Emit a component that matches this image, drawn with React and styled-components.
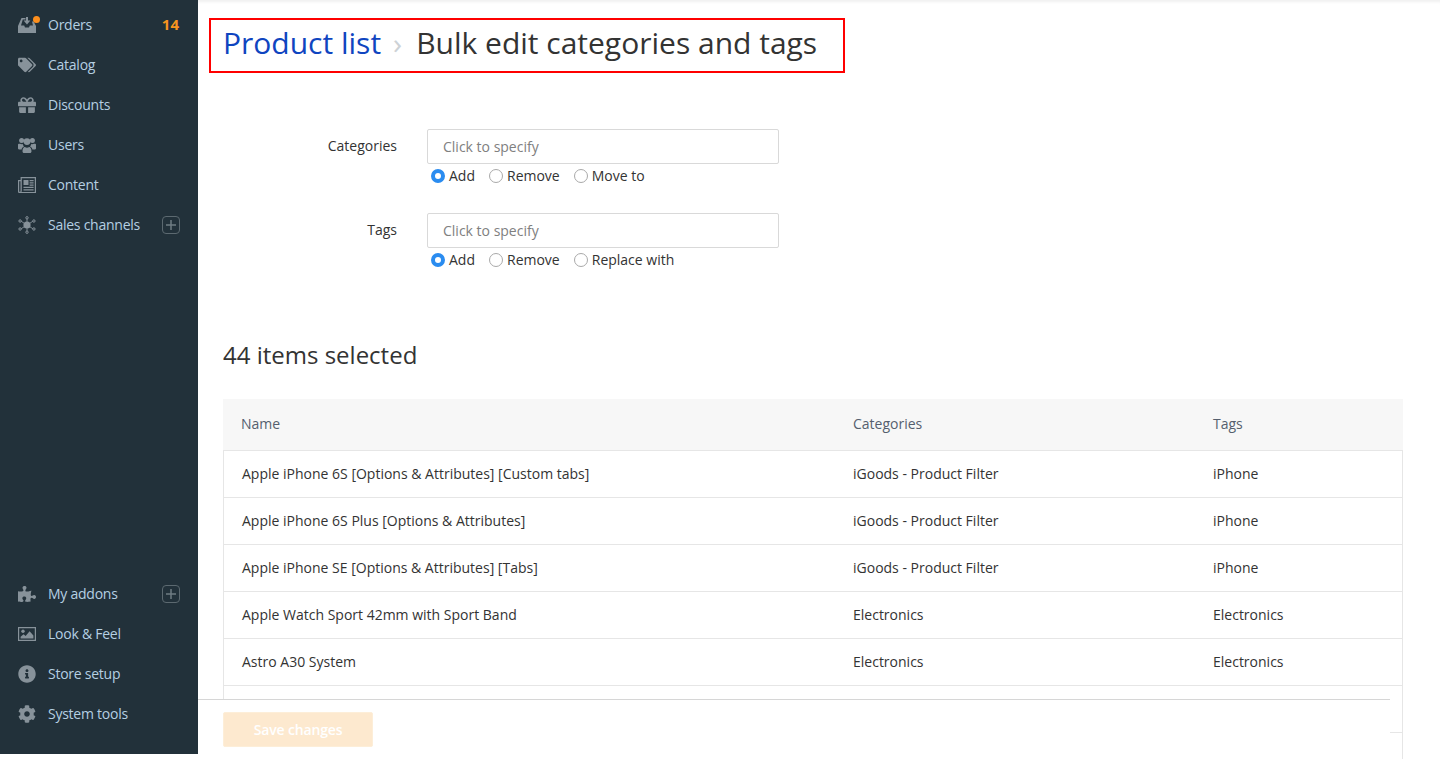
import React from "react";
import styled, { createGlobalStyle } from "styled-components";
import { FaTags, FaGift, FaPuzzlePiece, FaInfoCircle, FaCog } from "react-icons/fa";

const GlobalStyle = createGlobalStyle`
  html, body {
    margin: 0;
    height: 100%;
    overflow: hidden;
    background: #fff;
  }
  body {
    font-family: "Open Sans", "Liberation Sans", sans-serif;
    font-size: 14px;
    color: #333;
  }
  * {
    box-sizing: border-box;
  }
`;

const Page = styled.div`
  position: relative;
  display: flex;
  align-items: flex-start;
  width: 1440px;
  height: 759px;
  overflow: hidden;
`;

const Sidebar = styled.nav`
  flex: 0 0 198px;
  height: 754px;
  padding: 5px 0 20px;
  background: #22313a;
  display: flex;
  flex-direction: column;
  justify-content: space-between;
`;

const NavGroup = styled.div`
  display: flex;
  flex-direction: column;
`;

const NavItem = styled.div`
  height: 40px;
  padding: 0 18px;
  display: flex;
  align-items: center;
  color: #b5cfe2;
  font-size: 14px;
  letter-spacing: -0.25px;
`;

const NavIcon = styled.span`
  position: relative;
  flex: 0 0 30px;
  display: flex;
  align-items: center;
  color: #87929a;
  font-size: 18px;
`;

const NavLabel = styled.span`
  flex: 1;
  padding-bottom: 2px;
`;

const OrderDot = styled.i`
  position: absolute;
  top: 0;
  left: 15px;
  width: 7px;
  height: 7px;
  border-radius: 50%;
  background: #fd8f1d;
`;

const Count = styled.span`
  padding: 0 1px 2px 0;
  color: #f8951f;
  font-weight: 700;
  font-size: 15px;
  letter-spacing: 0;
`;

const PlusBox = styled.span`
  width: 18px;
  height: 18px;
  border: 1px solid #5c6970;
  border-radius: 4px;
  color: #6f7c83;
  display: flex;
  align-items: center;
  justify-content: center;
`;

const Main = styled.main`
  position: relative;
  flex: 1;
  height: 759px;
  padding: 18px 37px 0 25px;
  box-shadow: inset 0 4px 3px -2px #f0f0f0;
`;

const TitleBox = styled.div`
  display: inline-flex;
  align-items: center;
  width: 636px;
  height: 55px;
  margin-left: -14px;
  padding: 0 0 5px 12px;
  border: 2px solid #f00;
  font-size: 30px;
  line-height: 40px;
  color: #333;
`;

const TitleLink = styled.a`
  color: #0f45c0;
`;

const TitleSep = styled.span`
  margin: 0 14px 0 12px;
  color: #cdd2d6;
  font-size: 30px;
`;

const Form = styled.div`
  margin-top: 56px;
  display: flex;
  flex-direction: column;
  gap: 25px;
`;

const FieldRow = styled.div`
  display: flex;
`;

const FieldLabel = styled.label`
  flex: 0 0 174px;
  padding-top: 6px;
  text-align: right;
  line-height: 22px;
  color: #333;
`;

const FieldBody = styled.div`
  margin-left: 30px;
  width: 352px;
`;

const Picker = styled.div`
  height: 35px;
  padding: 0 15px;
  display: flex;
  align-items: center;
  border: 1px solid #d9d9d9;
  border-radius: 2px;
  color: #808080;
`;

const RadioRow = styled.div`
  height: 24px;
  padding-left: 4px;
  display: flex;
  align-items: center;
  gap: 14px;
`;

const RadioOption = styled.span`
  display: flex;
  align-items: center;
  gap: 4px;
  color: #333;
`;

const RadioText = styled.span`
  padding-bottom: 2px;
`;

const RadioMark = styled.i`
  width: 14px;
  height: 14px;
  border-radius: 50%;
  border: ${(p) => (p.$on ? "4.5px solid #2a8cf0" : "1px solid #a9a9a9")};
  background: #fff;
`;

const Heading = styled.h2`
  margin: 66px 0 0;
  font-size: 24px;
  font-weight: 400;
  line-height: 34px;
  color: #333;
`;

const Table = styled.div`
  margin-top: 27px;
  border-right: 1px solid #e6e6e6;
  border-left: 1px solid #e6e6e6;
`;

const Row = styled.div`
  display: grid;
  grid-template-columns: 611px 360px 1fr;
  height: 47px;
  padding: 0 0 2px 18px;
  align-items: center;
  border-bottom: 1px solid #e6e6e6;
  color: #333;
`;

const HeadRow = styled(Row)`
  grid-template-columns: 612px 360px 1fr;
  height: 52px;
  margin: 0 -1px;
  background: #f7f7f7;
  color: #555f6e;
`;

const Footer = styled.div`
  position: absolute;
  left: 0;
  right: 50px;
  top: 699px;
  height: 60px;
  padding: 12px 25px 0;
  background: #fff;
  border-top: 1px solid #d6d6d6;
`;

const SaveButton = styled.button`
  width: 150px;
  height: 35px;
  padding: 0;
  border: 1px solid #fdeed8;
  border-radius: 2px;
  background: #fde9cf;
  color: #fff;
  font-family: inherit;
  font-size: 14px;
  font-weight: 600;
  letter-spacing: -0.15px;
`;

const OrdersIcon = () => (
  <svg width="18" height="18" viewBox="0 0 18 18" fill="currentColor">
    <path d="M3.5 2H7.5V3.5H4.8L3 9.5H6.2L7 11.5H11L11.8 9.5H15L14 5.5H15.6L18 10V17H0V10Z" />
    <path d="M8 1h2v3.5h2.4L9 8.5 5.6 4.5H8z" />
  </svg>
);

const UsersIcon = () => (
  <svg width="18" height="18" viewBox="0 0 18 18" fill="currentColor">
    <circle cx="3.6" cy="4.6" r="2.5" />
    <circle cx="14.4" cy="4.6" r="2.5" />
    <circle cx="9" cy="5.6" r="3.4" />
    <path d="M0 8.6C0 7.8 1 7.4 2 7.8c1 .5 1.8.5 2.6.3.2 1 .8 1.8 1.4 2.3-1.4.4-2.2 1.6-2.4 3H1c-.7 0-1-.5-1-1.2z" />
    <path d="M18 8.6c0-.8-1-1.2-2-.8-1 .5-1.8.5-2.6.3-.2 1-.8 1.8-1.4 2.3 1.4.4 2.2 1.6 2.4 3H17c.7 0 1-.5 1-1.2z" />
    <path d="M4.5 15.2c0-2.4 1-4.2 2.4-4.2.7.5 1.3.8 2.1.8s1.4-.3 2.1-.8c1.4 0 2.4 1.8 2.4 4.2 0 1-.6 1.8-1.6 1.8H6.1c-1 0-1.6-.8-1.6-1.8z" />
  </svg>
);

const NewspaperIcon = () => (
  <svg width="18" height="18" viewBox="0 0 18 18" fill="currentColor">
    <path fillRule="evenodd" d="M2.6 1H18v16H1.6C.7 17 0 16.3 0 15.4V4h2.6zM3.8 2.2V15c0 .5-.2.8-.4.9h13.4V2.2zM1.2 5.2v10.2c0 .4.7.4 1.3 0V5.2z" />
    <path d="M5.5 4h5v5h-5zM11.6 4h4v1.3h-4zM11.6 6.3h4v1.3h-4zM11.6 8.5h4v1.2h-4zM5.5 10.8h10.1V12H5.5zM5.5 13.2h10.1v1.2H5.5z" />
  </svg>
);

const ImageIcon = () => (
  <svg width="18" height="18" viewBox="0 0 18 18" fill="currentColor">
    <path fillRule="evenodd" d="M0 2h18v14H0zM1.2 3.2v11.6h15.6V3.2z" />
    <circle cx="5" cy="6.2" r="1.7" />
    <path d="M2.6 13.6v-1.8l3-2.6 2 1.7 4-4.6 3.8 4.2v3.1z" />
  </svg>
);

const ChannelsIcon = () => (
  <svg width="18" height="18" viewBox="0 0 18 18" fill="currentColor" stroke="currentColor">
    <circle cx="9" cy="9" r="3.6" stroke="none" />
    <path strokeWidth="0.9" d="M9 2.5v13M3 5.2l12 7.6M15 5.2L3 12.8" />
    <circle cx="9" cy="1.8" r="1.2" fill="#22313a" />
    <circle cx="9" cy="16.2" r="1.2" fill="#22313a" />
    <circle cx="2.1" cy="5" r="1.2" fill="#22313a" />
    <circle cx="15.9" cy="5" r="1.2" fill="#22313a" />
    <circle cx="2.1" cy="13" r="1.2" fill="#22313a" />
    <circle cx="15.9" cy="13" r="1.2" fill="#22313a" />
  </svg>
);

const PlusIcon = () => (
  <PlusBox>
    <svg width="10" height="10" viewBox="0 0 10 10" stroke="currentColor" strokeWidth="1.5">
      <path d="M5 0v10M0 5h10" />
    </svg>
  </PlusBox>
);

const topNav = [
  { label: "Orders", icon: <OrdersIcon />, dot: true, extra: <Count>14</Count> },
  { label: "Catalog", icon: <FaTags /> },
  { label: "Discounts", icon: <FaGift /> },
  { label: "Users", icon: <UsersIcon /> },
  { label: "Content", icon: <NewspaperIcon /> },
  { label: "Sales channels", icon: <ChannelsIcon />, extra: <PlusIcon /> },
];

const bottomNav = [
  { label: "My addons", icon: <FaPuzzlePiece />, extra: <PlusIcon /> },
  { label: "Look & Feel", icon: <ImageIcon /> },
  { label: "Store setup", icon: <FaInfoCircle /> },
  { label: "System tools", icon: <FaCog /> },
];

const fields = [
  { label: "Categories", options: ["Add", "Remove", "Move to"] },
  { label: "Tags", options: ["Add", "Remove", "Replace with"] },
];

const products = [
  ["Apple iPhone 6S [Options & Attributes] [Custom tabs]", "iGoods - Product Filter", "iPhone"],
  ["Apple iPhone 6S Plus [Options & Attributes]", "iGoods - Product Filter", "iPhone"],
  ["Apple iPhone SE [Options & Attributes] [Tabs]", "iGoods - Product Filter", "iPhone"],
  ["Apple Watch Sport 42mm with Sport Band", "Electronics", "Electronics"],
  ["Astro A30 System", "Electronics", "Electronics"],
  ["", "", ""],
  ["", "", ""],
];

const renderNav = (items) =>
  items.map((item) => (
    <NavItem key={item.label}>
      <NavIcon>
        {item.icon}
        {item.dot && <OrderDot />}
      </NavIcon>
      <NavLabel>{item.label}</NavLabel>
      {item.extra}
    </NavItem>
  ));

const App = () => (
  <Page>
    <GlobalStyle />
    <Sidebar>
      <NavGroup>{renderNav(topNav)}</NavGroup>
      <NavGroup>{renderNav(bottomNav)}</NavGroup>
    </Sidebar>
    <Main>
      <TitleBox>
        <TitleLink>Product list</TitleLink>
        <TitleSep>›</TitleSep>
        Bulk edit categories and tags
      </TitleBox>
      <Form>
        {fields.map((field) => (
          <FieldRow key={field.label}>
            <FieldLabel>{field.label}</FieldLabel>
            <FieldBody>
              <Picker>Click to specify</Picker>
              <RadioRow>
                {field.options.map((option, i) => (
                  <RadioOption key={option}>
                    <RadioMark $on={i === 0} />
                    <RadioText>{option}</RadioText>
                  </RadioOption>
                ))}
              </RadioRow>
            </FieldBody>
          </FieldRow>
        ))}
      </Form>
      <Heading>44 items selected</Heading>
      <Table>
        <HeadRow>
          <span>Name</span>
          <span>Categories</span>
          <span>Tags</span>
        </HeadRow>
        {products.map((product, i) => (
          <Row key={i}>
            {product.map((cell, j) => (
              <span key={j}>{cell}</span>
            ))}
          </Row>
        ))}
      </Table>
      <Footer>
        <SaveButton>Save changes</SaveButton>
      </Footer>
    </Main>
  </Page>
);

export default App;
